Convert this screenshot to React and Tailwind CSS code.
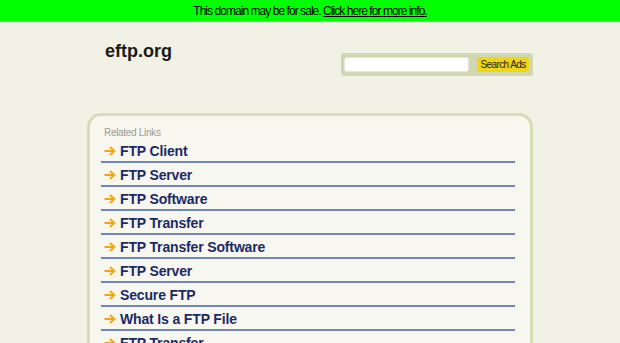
import React from "react";

const links = [
  "FTP Client",
  "FTP Server",
  "FTP Software",
  "FTP Transfer",
  "FTP Transfer Software",
  "FTP Server",
  "Secure FTP",
  "What Is a FTP File",
  "FTP Transfer",
];

function Arrow() {
  return (
    <svg width="12" height="10" viewBox="0 0 12 10" className="shrink-0">
      <path d="M0.5 5 H10" stroke="#f2a615" strokeWidth="2" fill="none" />
      <path d="M6 1 L10.3 5 L6 9" stroke="#f2a615" strokeWidth="2" fill="none" />
    </svg>
  );
}

export default function App() {
  return (
    <div className="h-[343px] overflow-hidden bg-[#f1f1e5] font-['Liberation_Sans',Arial,sans-serif]">
      <div className="h-[22px] bg-[#00ff00] border-b border-[#33ff33] flex items-center justify-center text-[12px] tracking-[-0.95px] text-black">
        <span>This domain may be for sale.&nbsp;</span>
        <a href="#" className="underline">Click here for more info.</a>
      </div>
      <div className="w-[446px] mx-auto">
        <div className="h-[91px] flex items-start justify-between">
          <div className="pt-[18px] pl-[18px] text-[18px] font-bold text-[#1c1a12] leading-[22px]">eftp.org</div>
          <div className="mt-[31px] w-[192px] h-[23px] bg-[#cfd8b1] rounded-[3px] flex items-center pl-[3px] pr-[4px] gap-[8px]">
            <div className="w-[125px] h-[15px] bg-white rounded-[3px] border border-[#e6e6e0]"></div>
            <div className="w-[52px] h-[15px] bg-[#f0d518] rounded-[3px] flex items-center justify-center text-[10px] text-[#222] tracking-[-0.6px]">Search Ads</div>
          </div>
        </div>
        <div className="border-[3px] border-[#d4deb5] rounded-[14px] bg-[#f8f7ef] pl-[11px] pr-[15px] pt-[10px] pb-[20px]">
          <div className="pl-[3px] text-[10px] leading-[13px] text-[#9a9a94] tracking-[-0.3px]">Related Links</div>
          {links.map((l, i) => (
            <div key={i} className="h-[24px] border-b-2 border-[#6e86b8] flex items-center gap-[4px] pl-[3px] pt-[1px]">
              <Arrow />
              <span className="text-[14px] font-bold text-[#1a2a66] tracking-[-0.15px] leading-[22px]">{l}</span>
            </div>
          ))}
        </div>
      </div>
    </div>
  );
}
